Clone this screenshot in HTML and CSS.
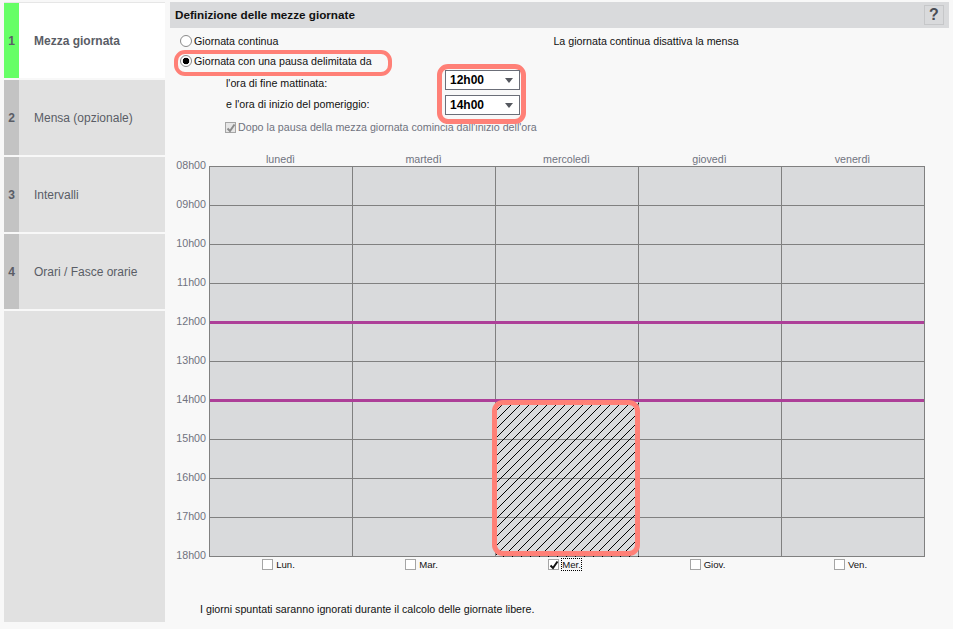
FILE: index.html
```html
<!DOCTYPE html>
<html>
<head>
	<title>Definizione delle mezze giornate</title>
	<link rel="stylesheet" href="styles.css">
</head>
<body>
	<div class="app">
		<ul class="steps">
			<li class="steps__item steps__item--active"><span class="steps__num">1</span><span class="steps__name">Mezza giornata</span></li>
			<li class="steps__item"><span class="steps__num">2</span><span class="steps__name">Mensa (opzionale)</span></li>
			<li class="steps__item"><span class="steps__num">3</span><span class="steps__name">Intervalli</span></li>
			<li class="steps__item"><span class="steps__num">4</span><span class="steps__name">Orari / Fasce orarie</span></li>
			<li class="steps__rest"></li>
		</ul>

		<div class="panel">
			<div class="panel__head">
				<span class="panel__title">Definizione delle mezze giornate</span>
				<span class="panel__help">?</span>
			</div>

			<div class="option">
				<label class="option__label"><span class="radio"></span>Giornata continua</label>
				<span class="option__note">La giornata continua disattiva la mensa</span>
			</div>

			<div class="pause">
				<div class="pause__left">
					<label class="option__label option__label--ring"><span class="radio radio--on"></span>Giornata con una pausa delimitata da</label>
					<div class="pause__time">l'ora di fine mattinata:</div>
					<div class="pause__time">e l'ora di inizio del pomeriggio:</div>
				</div>
				<div class="pause__right">
					<div class="select">12h00<span class="select__arrow"></span></div>
					<div class="select">14h00<span class="select__arrow"></span></div>
				</div>
			</div>

			<label class="round">
				<span class="check check--off">
					<svg width="12" height="12" viewBox="0 0 12 12"><path d="M2.5 6.5 L5 9 L9.5 2.5" fill="none" stroke="#8b8b8b" stroke-width="2"/></svg>
				</span>
				Dopo la pausa della mezza giornata comincia dall'inizio dell'ora
			</label>

			<div class="days">
				<div>lunedì</div>
				<div>martedì</div>
				<div>mercoledì</div>
				<div>giovedì</div>
				<div>venerdì</div>
			</div>

			<div class="week">
				<div class="hours">
					<div>08h00</div>
					<div>09h00</div>
					<div>10h00</div>
					<div>11h00</div>
					<div>12h00</div>
					<div>13h00</div>
					<div>14h00</div>
					<div>15h00</div>
					<div>16h00</div>
					<div>17h00</div>
					<div>18h00</div>
				</div>
				<div class="plan">
					<div class="plan__col"></div>
					<div class="plan__col"></div>
					<div class="plan__col"></div>
					<div class="plan__col"></div>
					<div class="plan__col"></div>
					<div class="plan__line plan__line--noon"></div>
					<div class="plan__line plan__line--after"></div>
					<svg class="plan__hatch" width="143" height="155">
						<defs>
							<pattern id="hatch" width="9" height="9" patternUnits="userSpaceOnUse">
								<path d="M0 9 L9 0" stroke="#000" stroke-width="1" shape-rendering="crispEdges"/>
							</pattern>
						</defs>
						<rect width="143" height="155" fill="url(#hatch)"/>
					</svg>
					<div class="plan__ring"></div>
				</div>
			</div>

			<div class="free">
				<label class="free__day"><span class="check"></span>Lun.</label>
				<label class="free__day"><span class="check"></span>Mar.</label>
				<label class="free__day">
					<span class="check">
						<svg width="12" height="12" viewBox="0 0 12 12"><path d="M2.5 6.5 L5 9 L9.5 2.5" fill="none" stroke="#111" stroke-width="2"/></svg>
					</span>
					<span class="free__focus">Mer.</span>
				</label>
				<label class="free__day"><span class="check"></span>Giov.</label>
				<label class="free__day"><span class="check"></span>Ven.</label>
			</div>

			<p class="foot">I giorni spuntati saranno ignorati durante il calcolo delle giornate libere.</p>
		</div>
	</div>
</body>
</html>
```

FILE: styles.css
```css
*, *::before {
	box-sizing: border-box;
}
html {
	background: #F8F8F8; /* page */
}
body {
	margin: 0;
	font-family: "Liberation Sans", Arial, sans-serif;
	font-size: 10.7px;
	color: #111111;
}
.app {
	display: flex;
	padding: 2px 4px 0;
	gap: 5px;
}

/* left steps */
.steps {
	display: flex;
	flex-direction: column;
	gap: 2px;
	width: 161px;
	height: 620px;
	margin: 0;
	padding: 0;
	list-style: none;
	border-top: 1px solid #E6E6E6;
	font-size: 12px;
}
.steps__item {
	display: flex;
	align-items: center;
	height: 75px;
	background: #E1E1E1;
	color: #5A5D66;
}
.steps__item--active {
	background: #FFFFFF;
	font-weight: bold;
}
.steps__num {
	display: flex;
	align-items: center;
	justify-content: center;
	width: 15px;
	height: 100%;
	margin-right: 15px;
	background: #C3C3C3;
	font-weight: bold;
}
.steps__item--active .steps__num {
	background: #66FF66;
}
.steps__rest {
	flex: 1;
	background: #E1E1E1;
}

/* right panel */
.panel {
	width: 779px;
}
.panel__head {
	display: flex;
	align-items: center;
	justify-content: space-between;
	height: 26px;
	padding: 0 5px;
	background: #D9DADC;
}
.panel__title {
	padding-bottom: 1px;
	font-size: 11.7px;
	font-weight: bold;
}
.panel__help {
	display: flex;
	align-items: center;
	justify-content: center;
	width: 20px;
	height: 20px;
	border: 1px solid #C6C7C9;
	color: #4A4D55;
	font-size: 16px;
	font-weight: bold;
}

.option {
	display: flex;
	align-items: center;
	height: 20px;
	margin-top: 3px;
	padding-left: 10px;
}
.option__label {
	display: flex;
	align-items: center;
	gap: 2px;
	height: 20px;
	white-space: nowrap;
}
.option__label--ring {
	position: relative;
}
.option__label--ring::before {
	content: "";
	position: absolute;
	left: -6px;
	top: -1px;
	width: 218px;
	height: 26px;
	border: 4px solid #FF8077;
	border-radius: 11px;
}
.option__note {
	margin-left: 275px;
}
.radio {
	width: 12px;
	height: 12px;
	border: 1px solid #8A8A8A;
	border-radius: 50%;
	background: #FFFFFF;
}
.radio--on {
	background: radial-gradient(circle, #000000 0, #000000 3px, #FFFFFF 3.6px);
}

.pause {
	display: flex;
	padding-left: 10px;
}
.pause__left {
	width: 265px;
}
.pause__time {
	height: 22px;
	padding: 1px 0 0 46px;
	line-height: 16px;
}
.pause__time:nth-child(2) {
	margin-top: 3px;
}
.pause__time:nth-child(3) {
	padding-top: 0;
}
.pause__right {
	position: relative;
	display: flex;
	flex-direction: column;
	gap: 5px;
	padding-top: 19px;
}
.pause__right::before {
	content: "";
	position: absolute;
	left: -8px;
	top: 13px;
	width: 89px;
	height: 60px;
	border: 5px solid #FF8077;
	border-radius: 11px;
}
.select {
	position: relative;
	width: 75px;
	height: 20px;
	padding-left: 4px;
	border: 1px solid #6B6E78;
	background: #FFFFFF;
	color: #000000;
	font-size: 12px;
	font-weight: bold;
	line-height: 18px;
}
.select__arrow {
	position: absolute;
	right: 6px;
	top: 7px;
	border-top: 5px solid #55585F;
	border-left: 4px solid transparent;
	border-right: 4px solid transparent;
}

.round {
	display: flex;
	align-items: center;
	gap: 2px;
	height: 20px;
	margin-top: -1px;
	padding-left: 55px;
	color: #70737F;
}
.check {
	display: flex;
	width: 11px;
	height: 11px;
	border: 1px solid #A5A5A5;
	background: #FFFFFF;
}
.check svg {
	flex: none;
	margin: -1px;
}
.check--off {
	background: #E6E6E6;
}

.days {
	display: grid;
	grid-template-columns: repeat(5, 143px);
	height: 14px;
	margin-top: 15px;
	padding-left: 39px;
	color: #70737F;
	text-align: center;
	line-height: 14px;
}

.week {
	display: flex;
}
.hours {
	width: 37px;
	margin: -8px 0 -6px;
	color: #70737F;
	text-align: right;
}
.hours div {
	height: 39px;
	padding-right: 1px;
	line-height: 14px;
}
.hours div:last-child {
	height: 14px;
}
.plan {
	position: relative;
	display: grid;
	grid-template-columns: repeat(5, 143px);
	width: 716px;
	height: 391px;
	margin-left: 2px;
	border: 1px solid #808080;
	background: #D9DADC repeating-linear-gradient(to bottom, transparent 0, transparent 38px, #808080 38px, #808080 39px);
}
.plan__col {
	border-right: 1px solid #808080;
}
.plan__col:nth-child(5) {
	border-right: none;
}
.plan__line {
	position: absolute;
	left: 0;
	right: 0;
	height: 3px;
	background: #AD3F98;
}
.plan__line--noon {
	top: 154px;
}
.plan__line--after {
	top: 232px;
}
.plan__hatch {
	position: absolute;
	left: 286px;
	top: 235px;
}
.plan__ring {
	position: absolute;
	left: 282px;
	top: 233px;
	width: 148px;
	height: 156px;
	border: 5px solid #FF8077;
	border-radius: 11px;
}

.free {
	display: grid;
	grid-template-columns: repeat(5, 143px);
	height: 14px;
	padding-left: 37px;
}
.free__day {
	display: flex;
	align-items: center;
	justify-content: center;
	gap: 3px;
	font-size: 9.6px;
}
.free__focus {
	outline: 1px dotted #000000;
}

.foot {
	margin: 32px 0 0 30px;
}
```
